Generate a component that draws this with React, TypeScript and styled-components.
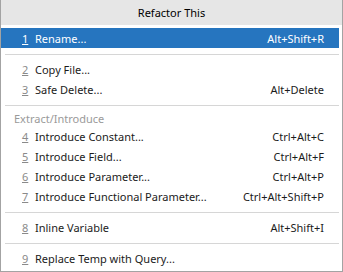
import styled, { createGlobalStyle } from "styled-components"

const Global = createGlobalStyle`
  html, body{
    margin      : 0;
    padding     : 0;
    background  : #ffffff;
  }
`

type Item = {
  key?      : string
  label     : string
  shortcut? : string
  active?   : boolean
}

type Block = { title?: string, items: Item[] }

const blocks: Block[] = [
  { items: [{ key: "1", label: "Rename...", shortcut: "Alt+Shift+R", active: true }] },
  { items: [
    { key: "2", label: "Copy File..." },
    { key: "3", label: "Safe Delete...", shortcut: "Alt+Delete" },
  ] },
  { title: "Extract/Introduce", items: [
    { key: "4", label: "Introduce Constant...", shortcut: "Ctrl+Alt+C" },
    { key: "5", label: "Introduce Field...", shortcut: "Ctrl+Alt+F" },
    { key: "6", label: "Introduce Parameter...", shortcut: "Ctrl+Alt+P" },
    { key: "7", label: "Introduce Functional Parameter...", shortcut: "Ctrl+Alt+Shift+P" },
  ] },
  { items: [{ key: "8", label: "Inline Variable", shortcut: "Alt+Shift+I" }] },
  { items: [{ key: "9", label: "Replace Temp with Query..." }] },
]

const Popup = styled.div`
  width           : 343px;
  height          : 272px;
  box-sizing      : border-box;
  border          : 1px solid #a3a3a3;
  border-top      : none;
  background      : #ffffff;
  font-family     : "Noto Sans", "Liberation Sans", sans-serif;
  font-size       : 11px;
  color           : #1b1b1b;
  display         : flex;
  flex-direction  : column;
  overflow        : hidden;
`

const Title = styled.div`
  height          : 25px;
  margin          : 0 -1px;
  background      : #e6e6e6;
  display         : flex;
  align-items     : center;
  justify-content : center;
  color           : #000000;
  flex-shrink     : 0;
`

const List = styled.div`
  display         : flex;
  flex-direction  : column;
  padding         : 3px 3px 0 0;
`

const Row = styled.div<{ $active?: boolean }>`
  height          : 20px;
  display         : flex;
  align-items     : center;
  padding         : 0 15px 0 21px;
  background      : ${p => p.$active ? "#2675bf" : "transparent"};
  color           : ${p => p.$active ? "#ffffff" : "#1b1b1b"};
`

const Key = styled.span<{ $active?: boolean }>`
  width           : 13px;
  text-decoration : underline;
  color           : ${p => p.$active ? "#ffffff" : "#8a8a8a"};
`

const Label = styled.span`
  flex            : 1;
  white-space     : nowrap;
`

const Shortcut = styled.span`
  white-space     : nowrap;
`

const Section = styled.div`
  height          : 16px;
  display         : flex;
  align-items     : center;
  padding-left    : 13px;
  color           : #9a9a9a;
`

const Divider = styled.div`
  height          : 1px;
  margin          : 6px 0 4px 4px;
  background      : #d6d6d6;
`

export default function App(){
  return <>
    <Global/>
    <Popup>
      <Title>Refactor This</Title>
      <List>
        {blocks.map((b, i) => <div key={i}>
          {i > 0 && <Divider/>}
          {b.title && <Section>{b.title}</Section>}
          {b.items.map(it =>
            <Row key={it.label} $active={it.active}>
              <Key $active={it.active}>{it.key}</Key>
              <Label>{it.label}</Label>
              {it.shortcut && <Shortcut>{it.shortcut}</Shortcut>}
            </Row>
          )}
        </div>)}
      </List>
    </Popup>
  </>
}
